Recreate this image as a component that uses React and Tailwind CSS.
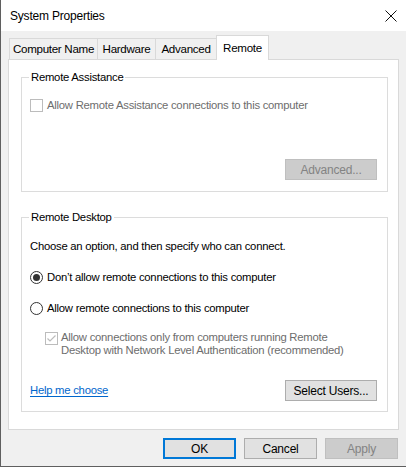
import { useState } from "react";

const FONT = { fontFamily: '"Liberation Sans", Arial, sans-serif' };

const tabs = [
  { label: "Computer Name", w: "w-[88px]" },
  { label: "Hardware", w: "w-[58px]" },
  { label: "Advanced", w: "w-[61px]" },
];

function CloseIcon() {
  return (
    <svg width="12" height="12" viewBox="0 0 12 12" className="block">
      <path d="M0.5 0.5 L11.5 11.5 M11.5 0.5 L0.5 11.5" stroke="#111" strokeWidth="1" />
    </svg>
  );
}

function Checkbox({ checked }) {
  return (
    <span className="flex h-[13px] w-[13px] shrink-0 items-center justify-center border border-[#bcbcbc] bg-white">
      {checked && (
        <svg width="11" height="11" viewBox="0 0 11 11">
          <path d="M1.5 5.5 L4 8 L9.5 2.5" fill="none" stroke="#bcbcbc" strokeWidth="1.2" />
        </svg>
      )}
    </span>
  );
}

function Radio({ checked, onClick }) {
  return (
    <span
      onClick={onClick}
      className="flex h-[13px] w-[13px] shrink-0 items-center justify-center rounded-full border border-[#333] bg-white"
    >
      {checked && <span className="h-[7px] w-[7px] rounded-full bg-[#333]" />}
    </span>
  );
}

function Button({ children, disabled, primary, className = "" }) {
  return (
    <button
      className={
        "flex h-[21px] items-center justify-center text-[12px] tracking-[-0.2px] " +
        (disabled
          ? "border border-[#bfbfbf] bg-[#cccccc] text-[#838383] "
          : primary
          ? "border-2 border-[#0078d7] bg-[#e1e1e1] text-black "
          : "border border-[#adadad] bg-[#e1e1e1] text-black ") +
        className
      }
    >
      {children}
    </button>
  );
}

export default function App() {
  const [allowRemote, setAllowRemote] = useState(false);

  return (
    <div
      style={FONT}
      className="flex h-[467px] w-[406px] flex-col overflow-hidden border-b border-l border-[#5f5f5f] bg-[#f0f0f0] text-[11.3px] tracking-[-0.25px] text-black"
    >
      {/* title bar */}
      <div className="flex h-[31px] shrink-0 items-center justify-between bg-white pl-[9px] pr-[9px]">
        <span className="text-[12px] tracking-[-0.2px]">System Properties</span>
        <CloseIcon />
      </div>

      {/* tab strip */}
      <div className="mt-[4px] flex h-[24px] items-end whitespace-nowrap pl-[8px] text-[11.6px] tracking-[-0.3px]">
        {tabs.map((t) => (
          <div
            key={t.label}
            className={
              "flex h-[21px] items-center justify-center border-l border-t border-[#d9d9d9] bg-[#f0f0f0] " +
              t.w
            }
          >
            {t.label}
          </div>
        ))}
        <div className="relative z-10 -mb-px flex h-[25px] w-[53px] items-start justify-center border-l border-r border-t border-[#d9d9d9] bg-white pt-[3px]">
          Remote
        </div>
      </div>

      {/* tab page */}
      <div className="ml-[7px] h-[371px] w-[391px] border border-[#d9d9d9] bg-white pl-[12px] pr-[10px]">
        <fieldset className="mt-[9px] h-[123px] border border-[#dcdcdc]">
          <legend className="ml-[7px] px-[2px] leading-[16px]">Remote Assistance</legend>
          <div className="mt-[12px] flex h-[16px] items-center gap-[4px] pl-[8px] text-[#6d6d6d]">
            <Checkbox />
            <span>Allow Remote Assistance connections to this computer</span>
          </div>
          <div className="mt-[46px] flex justify-end pr-[10px]">
            <Button disabled className="w-[92px]">
              Advanced...
            </Button>
          </div>
        </fieldset>

        <fieldset className="mt-[17px] h-[203px] border border-[#dcdcdc]">
          <legend className="ml-[7px] px-[2px] leading-[16px]">Remote Desktop</legend>
          <div className="mt-[13px] flex h-[16px] items-center pl-[8px]">
            Choose an option, and then specify who can connect.
          </div>
          <div className="mt-[15px] flex h-[16px] items-center gap-[4px] pl-[8px]">
            <Radio checked={!allowRemote} onClick={() => setAllowRemote(false)} />
            <span>Don’t allow remote connections to this computer</span>
          </div>
          <div className="mt-[15px] flex h-[16px] items-center gap-[4px] pl-[8px]">
            <Radio checked={allowRemote} onClick={() => setAllowRemote(true)} />
            <span>Allow remote connections to this computer</span>
          </div>
          <div className="mt-[15px] flex items-start gap-[3px] pl-[23px] text-[#6d6d6d]">
            <span className="pt-[1px]">
              <Checkbox checked />
            </span>
            <span className="leading-[13px]">
              Allow connections only from computers running Remote
              <br />
              Desktop with Network Level Authentication (recommended)
            </span>
          </div>
          <div className="mt-[23px] flex items-center justify-between pl-[8px] pr-[10px]">
            <a className="text-[#0066cc] underline underline-offset-2">Help me choose</a>
            <Button className="w-[92px]">Select Users...</Button>
          </div>
        </fieldset>
      </div>

      {/* dialog buttons */}
      <div className="mt-[8px] flex justify-end gap-[8px] pr-[8px]">
        <Button primary className="w-[73px]">
          OK
        </Button>
        <Button className="w-[73px]">Cancel</Button>
        <Button disabled className="w-[73px]">
          Apply
        </Button>
      </div>
    </div>
  );
}
